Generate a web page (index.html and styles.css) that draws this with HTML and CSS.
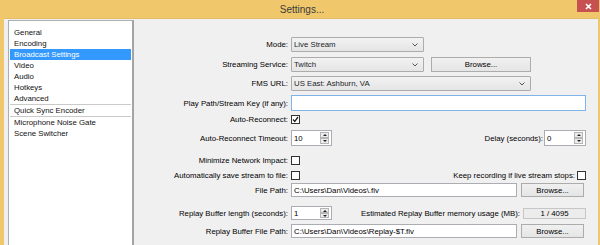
FILE: index.html
```html
<!DOCTYPE html>
<html>
<head>
<meta charset="utf-8">
<link rel="stylesheet" href="styles.css">
</head>
<body>
<div class="window">
  <div class="titlebar">
    <span class="title">Settings...</span>
    <div class="close"><svg width="7" height="7" viewBox="0 0 7 7"><path d="M1 1L6 6M6 1L1 6" stroke="#fff" stroke-width="1.6"/></svg></div>
  </div>
  <div class="client">
    <div class="list">
      <div class="item">General</div>
      <div class="item">Encoding</div>
      <div class="item sel">Broadcast Settings</div>
      <div class="item">Video</div>
      <div class="item">Audio</div>
      <div class="item">Hotkeys</div>
      <div class="item">Advanced</div>
      <div class="sep"></div>
      <div class="item">Quick Sync Encoder</div>
      <div class="sep"></div>
      <div class="item">Microphone Noise Gate</div>
      <div class="item">Scene Switcher</div>
    </div>
    <div class="form">
      <div class="row h15">
        <span class="lbl">Mode:</span>
        <div class="combo w133"><span>Live Stream</span><svg class="chev" width="6" height="4" viewBox="0 0 6 4"><path d="M0.5 0.5L3 3L5.5 0.5" fill="none" stroke="#555" stroke-width="1"/></svg></div>
      </div>
      <div class="row h15 mt5">
        <span class="lbl">Streaming Service:</span>
        <div class="combo w133"><span>Twitch</span><svg class="chev" width="6" height="4" viewBox="0 0 6 4"><path d="M0.5 0.5L3 3L5.5 0.5" fill="none" stroke="#555" stroke-width="1"/></svg></div>
        <div class="btn w100 ml7">Browse...</div>
      </div>
      <div class="row h15 mt4">
        <span class="lbl">FMS URL:</span>
        <div class="combo w240"><span>US East: Ashburn, VA</span><svg class="chev" width="6" height="4" viewBox="0 0 6 4"><path d="M0.5 0.5L3 3L5.5 0.5" fill="none" stroke="#555" stroke-width="1"/></svg></div>
      </div>
      <div class="row h16 mt4">
        <span class="lbl">Play Path/Stream Key (if any):</span>
        <div class="edit focus w295"></div>
      </div>
      <div class="row h9 mt4">
        <span class="lbl">Auto-Reconnect:</span>
        <div class="chk"><svg width="7" height="7" viewBox="0 0 7 7"><path d="M1 3.5L2.8 5.5L6 1" fill="none" stroke="#222" stroke-width="1.3"/></svg></div>
      </div>
      <div class="row h16 mt6">
        <span class="lbl">Auto-Reconnect Timeout:</span>
        <div class="spin w41"><span>10</span><div class="spin-btns"><i><b class="up"></b></i><i><b class="down"></b></i></div></div>
        <div class="push">
          <span class="rlbl">Delay (seconds):</span>
          <div class="spin w42 ml1"><span>0</span><div class="spin-btns"><i><b class="up"></b></i><i><b class="down"></b></i></div></div>
        </div>
      </div>
      <div class="row h9 mt10">
        <span class="lbl">Minimize Network Impact:</span>
        <div class="chk"></div>
      </div>
      <div class="row h9 mt6">
        <span class="lbl">Automatically save stream to file:</span>
        <div class="chk"></div>
        <div class="push">
          <span class="rlbl">Keep recording if live stream stops:</span>
          <div class="chk ml2"></div>
        </div>
      </div>
      <div class="row h14 mt3">
        <span class="lbl">File Path:</span>
        <div class="edit w226"><span>C:\Users\Dan\Videos\.flv</span></div>
        <div class="btn w63 ml4">Browse...</div>
      </div>
      <div class="row h14 mt9">
        <span class="lbl">Replay Buffer length (seconds):</span>
        <div class="spin w41 h14"><span>1</span><div class="spin-btns"><i><b class="up"></b></i><i><b class="down"></b></i></div></div>
        <div class="push">
          <span class="rlbl">Estimated Replay Buffer memory usage (MB):</span>
          <div class="ro w63 ml3">1 / 4095</div>
        </div>
      </div>
      <div class="row h14 mt4">
        <span class="lbl">Replay Buffer File Path:</span>
        <div class="edit w226"><span>C:\Users\Dan\Videos\Replay-$T.flv</span></div>
        <div class="btn w63 ml4">Browse...</div>
      </div>
    </div>
  </div>
</div>
</body>
</html>
```

FILE: styles.css
```css
html, body { margin: 0; padding: 0; }
body {
  width: 600px;
  height: 245px;
  overflow: hidden;
  background: #f0c86b;
  font-family: "Liberation Sans", Arial, sans-serif;
  font-size: 7.8px;
  color: #000;
}
.window { height: 245px; display: flex; flex-direction: column; }
.titlebar {
  height: 19px;
  flex: none;
  position: relative;
  display: flex;
  align-items: center;
  justify-content: center;
}
.title { font-size: 10px; color: #3a3a3a; margin-left: 4px; }
.close {
  position: absolute;
  top: 0;
  right: 1px;
  width: 22px;
  height: 12px;
  background: #c75050;
  display: flex;
  align-items: center;
  justify-content: center;
}
.close svg { display: block; }
.client {
  flex: 1;
  min-height: 0;
  margin: -1px 2px 0 4px;
  background: #f0f0f0;
  display: flex;
  padding: 1px 0 0 4px;
  border-top: 1px solid #e2bd64;
}
.list {
  width: 126px;
  flex: none;
  box-sizing: border-box;
  border: 1px solid #abadb3;
  border-right: 2px solid #a4a4a4;
  border-bottom: none;
  background: #fff;
  padding-top: 6px;
}
.item {
  height: 11px;
  line-height: 11px;
  padding-left: 4px;
  margin: 0 1px;
  white-space: nowrap;
  color: #111;
}
.item.sel { background: #3399ff; color: #fff; }
.sep { height: 1px; background: #cacaca; margin: 0 1px; }

.form {
  flex: 1;
  display: flex;
  flex-direction: column;
  padding: 17px 13px 0 0;
}
.row { display: flex; align-items: center; flex: none; }
.h9 { height: 9px; }
.h14 { height: 14px; }
.h15 { height: 15px; }
.h16 { height: 16px; }
.mt3 { margin-top: 3px; }
.mt4 { margin-top: 4px; }
.mt5 { margin-top: 5px; }
.mt6 { margin-top: 6px; }
.mt9 { margin-top: 9px; }
.mt10 { margin-top: 10px; }
.ml1 { margin-left: 1px; }
.ml2 { margin-left: 2px; }
.ml3 { margin-left: 3px; }
.ml4 { margin-left: 4px; }
.ml7 { margin-left: 7px; }
.w41 { width: 41px; }
.w42 { width: 42px; }
.w63 { width: 63px; }
.w100 { width: 100px; }
.w133 { width: 133px; }
.w226 { width: 226px; }
.w240 { width: 240px; }
.w295 { width: 295px; }

.lbl {
  width: 154px;
  flex: none;
  text-align: right;
  margin-right: 3px;
  white-space: nowrap;
}
.rlbl { white-space: nowrap; }
.push { margin-left: auto; display: flex; align-items: center; }

.combo, .btn, .edit, .spin, .ro {
  box-sizing: border-box;
  height: 100%;
  display: flex;
  align-items: center;
  flex: none;
}
.combo {
  border: 1px solid #acacac;
  border-radius: 1px;
  background: linear-gradient(#f2f2f2, #e5e5e5);
  padding: 0 5px 0 2px;
  color: #1a1f2a;
}
.combo span { flex: 1; white-space: nowrap; }
.chev { display: block; }
.btn {
  border: 1px solid #acacac;
  background: linear-gradient(#f0f0f0, #e5e5e5);
  justify-content: center;
}
.edit {
  border: 1px solid #abadb3;
  background: #fff;
  padding-left: 2px;
  white-space: nowrap;
}
.edit.focus { border-color: #7eb4ea; }
.spin {
  border: 1px solid #abadb3;
  background: #fff;
  padding-left: 2px;
  height: 16px;
}
.spin.h14 { height: 14px; }
.spin-btns {
  margin-left: auto;
  margin-right: 2px;
  display: flex;
  flex-direction: column;
}
.spin-btns i {
  width: 9px;
  height: 6px;
  box-sizing: border-box;
  border: 1px solid #b5b5b5;
  background: #ececec;
  display: flex;
  align-items: center;
  justify-content: center;
}
.spin.h14 .spin-btns i { height: 5px; }
.spin-btns b { width: 0; height: 0; border-left: 2px solid transparent; border-right: 2px solid transparent; }
.spin-btns b.up { border-bottom: 2px solid #222; }
.spin-btns b.down { border-top: 2px solid #222; }
.ro {
  border: 1px solid #c6c6c6;
  background: #ececec;
  justify-content: center;
}
.chk {
  width: 9px;
  height: 9px;
  box-sizing: border-box;
  border: 1px solid #333;
  background: #fff;
  flex: none;
  display: flex;
  align-items: center;
  justify-content: center;
}
.chk svg { display: block; }
```
